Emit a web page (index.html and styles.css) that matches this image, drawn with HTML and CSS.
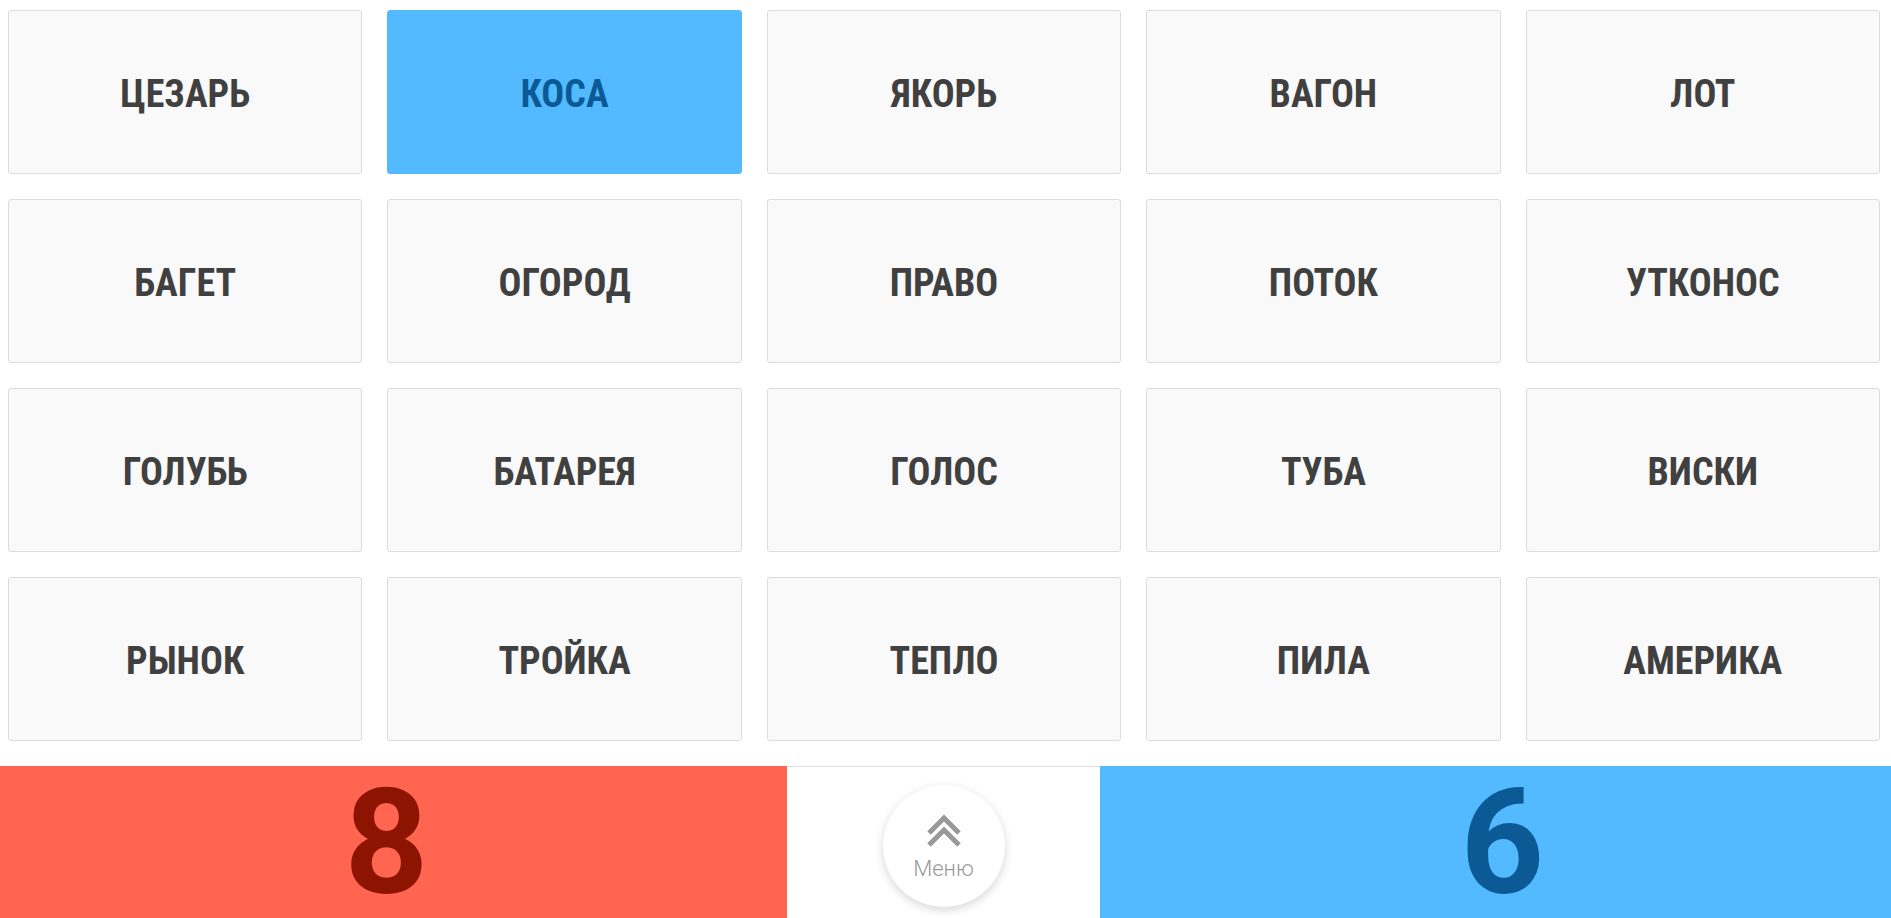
FILE: index.html
```html
<!DOCTYPE html>
<html lang="ru">
<head>
    <meta charset="UTF-8">
    <title>Игра</title>
    <link rel="stylesheet" href="styles.css">
</head>
<body>
    <div class="game">
        <div class="board">
            <div class="card">ЦЕЗАРЬ</div>
            <div class="card card-blue">КОСА</div>
            <div class="card">ЯКОРЬ</div>
            <div class="card">ВАГОН</div>
            <div class="card">ЛОТ</div>

            <div class="card">БАГЕТ</div>
            <div class="card">ОГОРОД</div>
            <div class="card">ПРАВО</div>
            <div class="card">ПОТОК</div>
            <div class="card">УТКОНОС</div>

            <div class="card">ГОЛУБЬ</div>
            <div class="card">БАТАРЕЯ</div>
            <div class="card">ГОЛОС</div>
            <div class="card">ТУБА</div>
            <div class="card">ВИСКИ</div>

            <div class="card">РЫНОК</div>
            <div class="card">ТРОЙКА</div>
            <div class="card">ТЕПЛО</div>
            <div class="card">ПИЛА</div>
            <div class="card">АМЕРИКА</div>
        </div>

        <div class="score-bar">
            <div class="score score-red">8</div>
            <div class="menu-cell">
                <button class="menu-button">
                    <svg class="menu-icon" width="34" height="34" viewBox="0 0 34 34">
                        <polyline points="2,19 17,4 32,19" />
                        <polyline points="2,31 17,16 32,31" />
                    </svg>
                    <span class="menu-label">Меню</span>
                </button>
            </div>
            <div class="score score-blue">6</div>
        </div>
    </div>
</body>
</html>
```

FILE: styles.css
```css
:root {
    --card-bg: #f9f9f9;
    --card-border: #dcdcdc;
    --text-color: #404040;
    --blue: #53baff;
    --blue-dark: #0b5a96;
    --red: #ff6550;
    --red-dark: #8c1400;
    --muted: #999;
}
html, body { margin: 0; padding: 0; height: 100%; background: #fff; }
body {
    font-family: "Roboto Condensed", Roboto, "Liberation Sans", sans-serif;
    color: var(--text-color);
    overflow: hidden;
}
.game { display: flex; flex-direction: column; height: 100vh; }

.board {
    display: grid;
    grid-template-columns: repeat(5, 1fr);
    grid-auto-rows: 164px;
    gap: 25px;
    padding: 10px 11px 25px 8px;
    flex-shrink: 0;
}
.card {
    display: flex; align-items: center; justify-content: center;
    background-color: var(--card-bg);
    border: 1px solid var(--card-border);
    border-radius: 3px;
    font-weight: 700; font-size: 38px; font-stretch: condensed;
    padding-top: 3px;
}
.card-blue { background-color: var(--blue); border-color: var(--blue); color: var(--blue-dark); }

.score-bar {
    display: grid;
    grid-template-columns: 787px 313px 1fr;
    flex-grow: 1;
    border-top: 1px solid #ddd;
    box-sizing: border-box;
}
.score {
    display: flex; align-items: center; justify-content: center;
    font-family: Roboto, "Liberation Sans", sans-serif;
    font-weight: 700; font-size: 146px; line-height: 1;
    margin-top: -1px; padding-top: 3px;
}
.score-red { background-color: var(--red); color: var(--red-dark); padding-right: 14px; }
.score-blue { background-color: var(--blue); color: var(--blue-dark); padding-left: 14px; }

.menu-cell { display: flex; align-items: center; justify-content: center; padding-top: 6px; }
.menu-button {
    width: 122px; height: 122px; border-radius: 50%;
    border: none; background: #fff; cursor: pointer;
    box-shadow: 0 3px 10px rgba(0, 0, 0, 0.16);
    display: flex; flex-direction: column; align-items: center; justify-content: center;
    padding: 4px 0 0 0;
}
.menu-icon { fill: none; stroke: var(--muted); stroke-width: 5; }
.menu-label {
    font-family: Roboto, "Liberation Sans", sans-serif;
    font-weight: 300; font-size: 22px; color: var(--muted);
    margin-top: 8px;
}
```
